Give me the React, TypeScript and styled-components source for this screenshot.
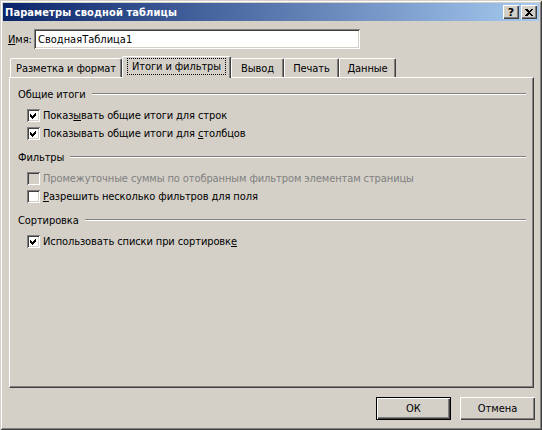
import React from "react";
import styled, { createGlobalStyle, css } from "styled-components";

const GlobalStyle = createGlobalStyle`
  html, body {
    margin: 0;
    padding: 0;
    background: #d4d0c8;
  }
  body {
    font-family: "DejaVu Sans Condensed", "DejaVu Sans", sans-serif;
    font-size: 11px;
    letter-spacing: -0.1px;
    color: #000;
  }
  u {
    text-underline-offset: 1px;
  }
`;

const raised = css`
  box-shadow: inset 1px 1px #ffffff, inset -1px -1px #404040,
    inset -2px -2px #808080;
`;

const Window = styled.div`
  width: 542px;
  height: 430px;
  box-sizing: border-box;
  padding: 3px;
  display: flex;
  flex-direction: column;
  background: #d4d0c8;
  box-shadow: inset 1px 1px #d4d0c8, inset -1px -1px #404040,
    inset 2px 2px #ffffff, inset -2px -2px #808080;
`;

const Caption = styled.div`
  height: 18px;
  display: flex;
  align-items: center;
  padding: 0 2px;
  background: linear-gradient(to right, #0a246a, #a6caf0);
  color: #fff;
`;

const CaptionTitle = styled.span`
  font-weight: bold;
  font-size: 11px;
  letter-spacing: 0.1px;
`;

const CaptionButtons = styled.div`
  margin-left: auto;
  display: flex;
  gap: 2px;
`;

const CaptionButton = styled.div`
  width: 16px;
  height: 14px;
  box-sizing: border-box;
  display: flex;
  align-items: center;
  justify-content: center;
  background: #d4d0c8;
  color: #000;
  font-family: "DejaVu Sans", sans-serif;
  font-weight: bold;
  font-size: 11px;
  line-height: 1;
  ${raised}
`;

const Body = styled.div`
  flex: 1;
  display: flex;
  flex-direction: column;
  padding: 8px 5px 7px 6px;
`;

const NameRow = styled.div`
  display: flex;
  align-items: center;
  margin-left: -1px;
`;

const NameLabel = styled.label`
  width: 26px;
  flex-shrink: 0;
`;

const NameInput = styled.input`
  width: 326px;
  height: 20px;
  box-sizing: border-box;
  flex-shrink: 0;
  border: none;
  outline: none;
  margin: 0;
  padding: 0 4px;
  font: inherit;
  color: #000;
  background: #fff;
  box-shadow: inset 1px 1px #808080, inset -1px -1px #ffffff,
    inset 2px 2px #404040, inset -2px -2px #d4d0c8;
`;

const TabStrip = styled.div`
  margin-top: 7px;
  height: 21px;
  display: flex;
  align-items: flex-end;
  padding-left: 1px;
`;

const Tab = styled.div<{ $active?: boolean; $w: number }>`
  width: ${(p) => p.$w}px;
  height: ${(p) => (p.$active ? 22 : 19)}px;
  margin-bottom: ${(p) => (p.$active ? -1 : 0)}px;
  box-sizing: border-box;
  display: flex;
  align-items: center;
  justify-content: center;
  position: relative;
  z-index: ${(p) => (p.$active ? 1 : 0)};
  background: #d4d0c8;
  border-top: 1px solid #ffffff;
  border-left: 1px solid #ffffff;
  border-right: 1px solid #404040;
  border-radius: 2px 2px 0 0;
  box-shadow: inset -1px 0 #808080;
  padding-bottom: ${(p) => (p.$active ? 2 : 0)}px;
`;

const FocusLabel = styled.span`
  outline: 1px dotted #000;
  outline-offset: 0;
  padding: 1px 4px;
`;

const Panel = styled.div`
  flex: 1;
  box-sizing: border-box;
  display: flex;
  flex-direction: column;
  gap: 10px;
  padding: 9px 7px 0 8px;
  border-top: 1px solid #ffffff;
  border-left: 1px solid #ffffff;
  border-right: 1px solid #404040;
  border-bottom: 1px solid #404040;
  box-shadow: inset -1px -1px #808080;
`;

const Group = styled.div`
  display: flex;
  flex-direction: column;
  gap: 4px;
`;

const GroupHeader = styled.div`
  height: 14px;
  display: flex;
  align-items: center;
  margin-bottom: 3px;
`;

const GroupLine = styled.div`
  flex: 1;
  margin-left: 6px;
  border-top: 1px solid #808080;
  border-bottom: 1px solid #ffffff;
`;

const CheckRow = styled.div<{ $disabled?: boolean }>`
  height: 14px;
  display: flex;
  align-items: center;
  gap: 3px;
  padding-left: 9px;
  color: ${(p) => (p.$disabled ? "#808080" : "#000")};
`;

const Box = styled.div<{ $disabled?: boolean }>`
  width: 13px;
  height: 13px;
  box-sizing: border-box;
  flex-shrink: 0;
  display: flex;
  align-items: center;
  justify-content: center;
  background: ${(p) => (p.$disabled ? "#d4d0c8" : "#fff")};
  box-shadow: inset 1px 1px #808080, inset -1px -1px #ffffff,
    inset 2px 2px #404040, inset -2px -2px #d4d0c8;
`;

const ButtonRow = styled.div`
  display: flex;
  justify-content: flex-end;
  gap: 9px;
  margin-top: 9px;
  margin-right: -1px;
`;

const Button = styled.button<{ $default?: boolean }>`
  width: 75px;
  height: 23px;
  box-sizing: border-box;
  margin: 0;
  padding: 0;
  font: inherit;
  color: #000;
  background: #d4d0c8;
  border: ${(p) => (p.$default ? "1px solid #000" : "none")};
  ${raised}
`;

type Item = { label: React.ReactNode; checked: boolean; disabled?: boolean };

const groups: { title: string; items: Item[] }[] = [
  {
    title: "Общие итоги",
    items: [
      {
        label: (
          <>
            Показ<u>ы</u>вать общие итоги для строк
          </>
        ),
        checked: true,
      },
      {
        label: (
          <>
            Показывать общие итоги для <u>с</u>толбцов
          </>
        ),
        checked: true,
      },
    ],
  },
  {
    title: "Фильтры",
    items: [
      {
        label: "Промежуточные суммы по отобранным фильтром элементам страницы",
        checked: false,
        disabled: true,
      },
      {
        label: (
          <>
            <u>Р</u>азрешить несколько фильтров для поля
          </>
        ),
        checked: false,
      },
    ],
  },
  {
    title: "Сортировка",
    items: [
      {
        label: (
          <>
            Использовать списки при сортировк<u>е</u>
          </>
        ),
        checked: true,
      },
    ],
  },
];

const tabs = [
  { label: "Разметка и формат", w: 112 },
  { label: "Итоги и фильтры", w: 109, active: true },
  { label: "Вывод", w: 53 },
  { label: "Печать", w: 55 },
  { label: "Данные", w: 57 },
];

function Check() {
  return (
    <svg width="9" height="9" viewBox="0 0 9 9" shapeRendering="crispEdges">
      <path d="M1 3 L3 5 L7 1 L7 4 L3 8 L1 6 Z" fill="#000" />
    </svg>
  );
}

export default function App() {
  return (
    <>
      <GlobalStyle />
      <Window>
        <Caption>
          <CaptionTitle>Параметры сводной таблицы</CaptionTitle>
          <CaptionButtons>
            <CaptionButton>?</CaptionButton>
            <CaptionButton>
              <svg width="8" height="7" viewBox="0 0 8 7" shapeRendering="crispEdges">
                <path
                  d="M0 0h2l2 2 2-2h2L5 3.5 8 7H6L4 5 2 7H0l3-3.5z"
                  fill="#000"
                />
              </svg>
            </CaptionButton>
          </CaptionButtons>
        </Caption>
        <Body>
          <NameRow>
            <NameLabel>
              <u>И</u>мя:
            </NameLabel>
            <NameInput defaultValue="СводнаяТаблица1" />
          </NameRow>
          <TabStrip>
            {tabs.map((t) => (
              <Tab key={t.label} $w={t.w} $active={t.active}>
                {t.active ? <FocusLabel>{t.label}</FocusLabel> : t.label}
              </Tab>
            ))}
          </TabStrip>
          <Panel>
            {groups.map((g) => (
              <Group key={g.title}>
                <GroupHeader>
                  {g.title}
                  <GroupLine />
                </GroupHeader>
                {g.items.map((it, i) => (
                  <CheckRow key={i} $disabled={it.disabled}>
                    <Box $disabled={it.disabled}>{it.checked && <Check />}</Box>
                    <span>{it.label}</span>
                  </CheckRow>
                ))}
              </Group>
            ))}
          </Panel>
          <ButtonRow>
            <Button $default>ОК</Button>
            <Button>Отмена</Button>
          </ButtonRow>
        </Body>
      </Window>
    </>
  );
}
